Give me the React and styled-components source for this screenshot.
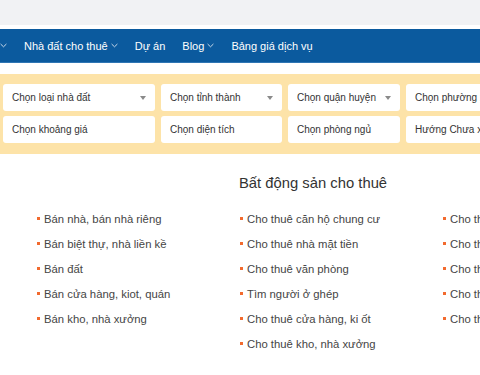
import React from 'react';
import styled, { createGlobalStyle } from 'styled-components';

const GlobalStyle = createGlobalStyle`
  html, body {
    margin: 0;
    padding: 0;
    background: #fff;
    font-family: "Liberation Sans", Arial, sans-serif;
    overflow: hidden;
  }
`;

const Page = styled.div`
  width: 480px;
  height: 375px;
  overflow: hidden;
  background: #fff;
`;

const TopBar = styled.div`
  height: 25px;
  background: #f1f2f4;
  margin-bottom: 4px;
`;

const Nav = styled.nav`
  height: 33px;
  background: #0b5a9e;
  border-bottom: 1px solid #2f76b4;
  overflow: hidden;
`;

const NavList = styled.ul`
  list-style: none;
  margin: 0 0 0 -63px;
  padding: 0;
  height: 100%;
  display: flex;
  align-items: center;
  gap: 17px;
  white-space: nowrap;
`;

const NavItem = styled.li`
  display: flex;
  align-items: center;
  gap: 3px;
  color: #fff;
  font-size: 11px;
  font-weight: 500;
`;

const Chevron = () => (
  <svg width="7" height="5" viewBox="0 0 7 5" fill="none">
    <path d="M0.6 1 L3.5 3.8 L6.4 1" stroke="#dfe8f2" strokeWidth="0.9" />
  </svg>
);

const Filter = styled.div`
  margin-top: 11px;
  background: #fde3a8;
  padding: 10px 0 11px 3px;
  overflow: hidden;
`;

const FilterGrid = styled.div`
  display: grid;
  grid-template-columns: 152px 121px 112px 130px;
  grid-auto-rows: 27px;
  gap: 5px 6px;
`;

const Field = styled.div`
  background: #fff;
  border-radius: 3px;
  display: flex;
  align-items: center;
  justify-content: space-between;
  padding: 0 9px 0 9px;
  font-size: 10px;
  color: #333;
  white-space: nowrap;
  overflow: hidden;
`;

const Caret = styled.span`
  width: 0;
  height: 0;
  border-left: 3.5px solid transparent;
  border-right: 3.5px solid transparent;
  border-top: 4px solid #8a8a8a;
  flex: none;
`;

const Listing = styled.section`
  display: grid;
  grid-template-columns: 203px 203px 203px;
  padding-left: 37px;
  padding-top: 20px;
`;

const Column = styled.div`
  display: flex;
  flex-direction: column;
`;

const Heading = styled.h2`
  margin: 0 0 13px -1px;
  height: 19px;
  font-size: 14.8px;
  font-weight: normal;
  color: #333;
  line-height: 19px;
  white-space: nowrap;
`;

const Links = styled.ul`
  list-style: none;
  margin: 0;
  padding: 0;
`;

const LinkItem = styled.li`
  display: flex;
  align-items: center;
  gap: 4px;
  height: 25px;
  font-size: 11.3px;
  color: #454545;
  white-space: nowrap;
  &::before {
    content: '';
    width: 3px;
    height: 3px;
    background: #f26a2e;
    flex: none;
  }
`;

const nav = [
  { label: 'Nhà đất bán', sub: true },
  { label: 'Nhà đất cho thuê', sub: true },
  { label: 'Dự án' },
  { label: 'Blog', sub: true },
  { label: 'Bảng giá dịch vụ' }
];

const fields = [
  { label: 'Chọn loại nhà đất', select: true },
  { label: 'Chọn tỉnh thành', select: true },
  { label: 'Chọn quận huyện', select: true },
  { label: 'Chọn phường xã', select: true },
  { label: 'Chọn khoảng giá' },
  { label: 'Chọn diện tích' },
  { label: 'Chọn phòng ngủ' },
  { label: 'Hướng Chưa xác định' }
];

const columns = [
  {
    title: '',
    items: [
      'Bán nhà, bán nhà riêng',
      'Bán biệt thự, nhà liền kề',
      'Bán đất',
      'Bán cửa hàng, kiot, quán',
      'Bán kho, nhà xưởng'
    ]
  },
  {
    title: 'Bất động sản cho thuê',
    items: [
      'Cho thuê căn hộ chung cư',
      'Cho thuê nhà mặt tiền',
      'Cho thuê văn phòng',
      'Tìm người ở ghép',
      'Cho thuê cửa hàng, ki ốt',
      'Cho thuê kho, nhà xưởng'
    ]
  },
  {
    title: '',
    items: [
      'Cho thuê nhà riêng',
      'Cho thuê nhà trọ, phòng trọ',
      'Cho thuê đất',
      'Cho thuê biệt thự',
      'Cho thuê loại khác'
    ]
  }
];

export default function App() {
  return (
    <Page>
      <GlobalStyle />
      <TopBar />
      <Nav>
        <NavList>
          {nav.map(item => (
            <NavItem key={item.label}>
              {item.label}
              {item.sub && <Chevron />}
            </NavItem>
          ))}
        </NavList>
      </Nav>
      <Filter>
        <FilterGrid>
          {fields.map(f => (
            <Field key={f.label}>
              {f.label}
              {f.select && <Caret />}
            </Field>
          ))}
        </FilterGrid>
      </Filter>
      <Listing>
        {columns.map((col, i) => (
          <Column key={i}>
            <Heading>{col.title}</Heading>
            <Links>
              {col.items.map(text => (
                <LinkItem key={text}>{text}</LinkItem>
              ))}
            </Links>
          </Column>
        ))}
      </Listing>
    </Page>
  );
}
